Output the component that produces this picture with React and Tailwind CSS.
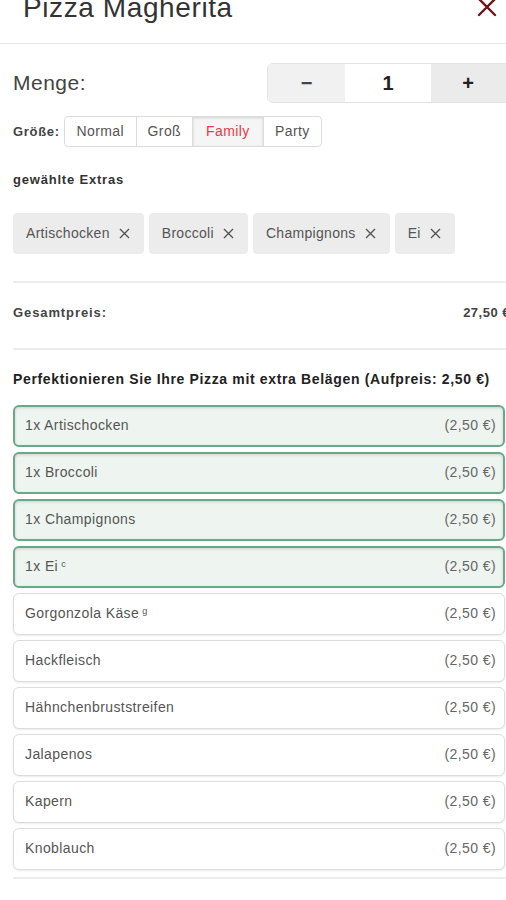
import React from "react";

const selected = ["1x Artischocken", "1x Broccoli", "1x Champignons", "1x Ei"];
const others = ["Gorgonzola Käse", "Hackfleisch", "Hähnchenbruststreifen", "Jalapenos", "Kapern", "Knoblauch"];
const sup = { "1x Ei": "c", "Gorgonzola Käse": "g" };

function Row({ name, active }) {
  return (
    <div
      className={
        active
          ? "flex h-[42px] w-[492px] items-center justify-between rounded-[6px] border-2 border-[#6aa88a] bg-[#eef5f0] pl-[10px] pr-[7px] shadow-[inset_0_1px_3px_rgba(0,0,0,0.15)]"
          : "flex h-[42px] w-[492px] items-center justify-between rounded-[6px] border border-[#dcdcdc] bg-white pl-[11px] pr-[8px] shadow-[0_1px_2px_rgba(0,0,0,0.08)]"
      }
    >
      <span className="text-[14px] tracking-[0.4px] text-[#555]">
        {name}
        {sup[name] && <sup className="ml-[3px] text-[9px]">{sup[name]}</sup>}
      </span>
      <span className="text-[14px] tracking-[0.4px] text-[#666]">(2,50 €)</span>
    </div>
  );
}

function XIcon() {
  return (
    <svg width="11" height="11" viewBox="0 0 11 11">
      <path d="M1 1 L10 10 M10 1 L1 10" stroke="#555" strokeWidth="1.4" />
    </svg>
  );
}

export default function App() {
  return (
    <div className="h-[900px] w-[506px] overflow-hidden bg-white font-['Liberation_Sans',Arial,sans-serif]">
      <div className="flex h-[44px] items-start justify-between border-b border-[#e6e6e6] pl-[23px] pr-[9px]">
        <h1 className="mt-[-10px] text-[28px] leading-[36px] tracking-[0.6px] text-[#333]">Pizza Magherita</h1>
        <svg width="20" height="20" viewBox="0 0 20 20" className="mt-[-3px]">
          <path d="M2 2 L18 18 M18 2 L2 18" stroke="#6b1515" strokeWidth="2.4" strokeLinecap="round" />
        </svg>
      </div>

      <div className="w-[530px] pl-[13px]">
        <div className="mt-[19px] flex h-[40px] items-center justify-between">
          <span className="text-[21px] tracking-[0.5px] text-[#444]">Menge:</span>
          <div className="flex h-[40px] w-[263px] overflow-hidden rounded-l-[6px] border border-[#e2e2e2]">
            <div className="flex w-[77px] items-center justify-center bg-[#f1f1f1] text-[20px] font-bold text-[#444]">−</div>
            <div className="flex w-[86px] items-center justify-center bg-white text-[20px] font-bold text-[#222]">1</div>
            <div className="flex flex-1 items-center justify-center bg-[#ebebeb] pr-[24px] text-[20px] font-bold text-[#222]">+</div>
          </div>
        </div>

        <div className="mt-[13px] flex h-[31px] items-center gap-[4px]">
          <span className="text-[13px] font-bold tracking-[0.7px] text-[#444]">Größe:</span>
          <div className="flex h-[31px] overflow-hidden rounded-[4px] border border-[#dcdcdc] text-[14px] tracking-[0.4px]">
            <div className="flex w-[72px] items-center justify-center border-r border-[#dcdcdc] text-[#555]">Normal</div>
            <div className="flex w-[56px] items-center justify-center border-r border-[#dcdcdc] text-[#555]">Groß</div>
            <div className="flex w-[71px] items-center justify-center border-r border-[#dcdcdc] bg-[#f5f5f5] text-[#e83a48] shadow-[inset_0_1px_3px_rgba(0,0,0,0.15)]">Family</div>
            <div className="flex w-[57px] items-center justify-center text-[#555]">Party</div>
          </div>
        </div>

        <div className="mt-[23px] text-[13px] font-bold tracking-[0.8px] text-[#333]">gewählte Extras</div>

        <div className="mt-[23px] flex gap-[5px]">
          {["Artischocken", "Broccoli", "Champignons", "Ei"].map((t) => (
            <div key={t} className="flex h-[41px] items-center gap-[9px] rounded-[4px] bg-[#ececec] pl-[13px] pr-[14px] text-[14px] tracking-[0.3px] text-[#555]">
              <span>{t}</span>
              <XIcon />
            </div>
          ))}
        </div>

        <div className="mt-[27px] h-[2px] bg-[#ececec]" />

        <div className="flex h-[65px] w-[497px] items-start justify-between pt-[20px]">
          <span className="text-[13px] font-bold tracking-[0.9px] text-[#444]">Gesamtpreis:</span>
          <span className="text-[13px] font-bold tracking-[0.5px] text-[#444]">27,50 €</span>
        </div>

        <div className="h-[2px] bg-[#ececec]" />

        <div className="mt-[19px] text-[14px] font-bold tracking-[0.65px] text-[#222]">
          Perfektionieren Sie Ihre Pizza mit extra Belägen (Aufpreis: 2,50 €)
        </div>

        <div className="mt-[15px] flex flex-col gap-[5px]">
          {selected.map((n) => (
            <Row key={n} name={n} active />
          ))}
          {others.map((n) => (
            <Row key={n} name={n} />
          ))}
        </div>

        <div className="mt-[7px] h-[2px] w-[493px] bg-[#ececec]" />
      </div>
    </div>
  );
}
